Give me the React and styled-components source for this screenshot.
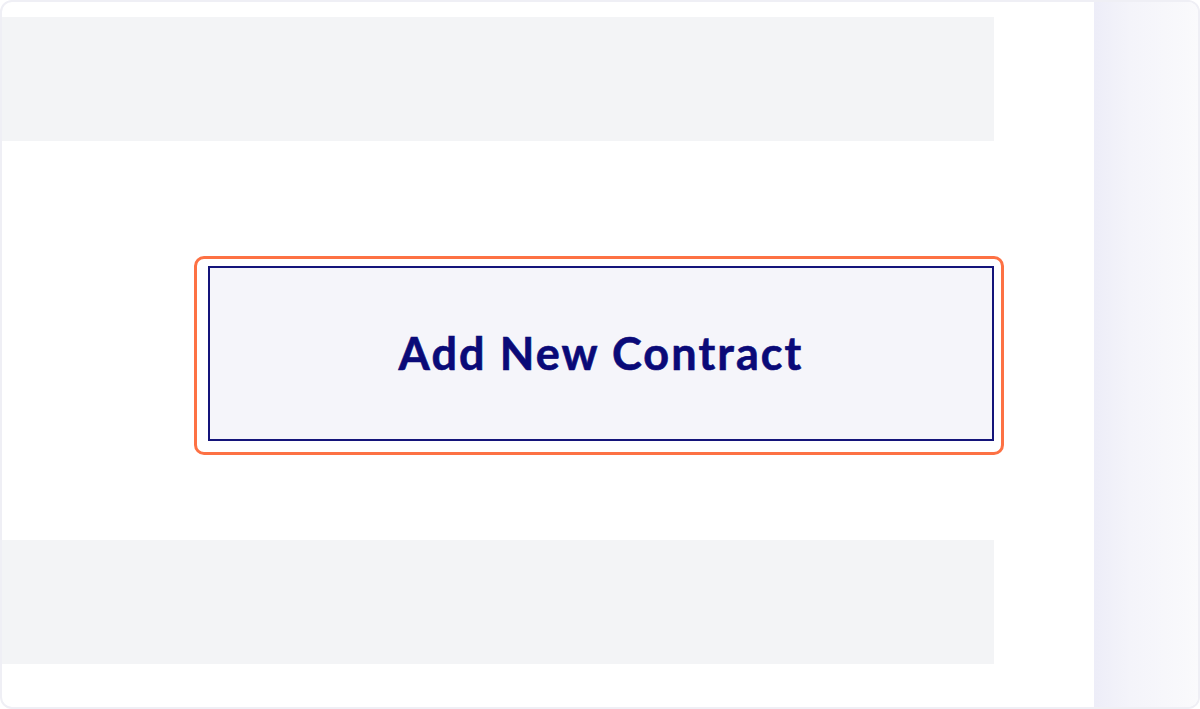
import React from 'react';
import styled, { createGlobalStyle } from 'styled-components';

const GlobalStyle = createGlobalStyle`
    html, body {
        margin: 0;
        padding: 0;
        background: #ffffff;
    }
    * {
        box-sizing: border-box;
    }
`

const Frame = styled.div`
    width: 1200px;
    height: 709px;
    display: flex;
    border: 2px solid #efeff5;
    border-radius: 12px;
    overflow: hidden;
    background: #fff;
`

const Main = styled.main`
    flex: 1;
    display: flex;
    flex-direction: column;
    padding: 15px 100px 0 0;
`

const Placeholder = styled.div`
    height: 124px;
    background: #f3f4f6;
    flex-shrink: 0;
`

const Middle = styled.div`
    height: 399px;
    flex-shrink: 0;
    display: flex;
    align-items: flex-start;
    justify-content: flex-end;
    padding-top: 115px;
`

const Highlight = styled.div`
    width: 810px;
    height: 199px;
    margin-right: -10px;
    border: 3px solid #fd7144;
    border-radius: 10px;
    padding: 7px 7px 11px 11px;
    display: flex;
`

const AddButton = styled.button`
    flex: 1;
    background: #f5f5fa;
    border: 2px solid #14147a;
    border-radius: 0;
    font-family: Lato, "Open Sans", sans-serif;
    font-weight: 700;
    font-size: 45px;
    color: #0a0a78;
    cursor: pointer;
    padding: 0 0 2px;
    letter-spacing: 2.1px;
    -webkit-text-stroke: 0.6px #0a0a78;
`

const SidePanel = styled.aside`
    width: 104px;
    background: linear-gradient(90deg, #ededf8 0%, #f4f4fa 35%, #fafafc 100%);
`

export default function App() {
    return (
        <>
            <GlobalStyle />
            <Frame>
                <Main>
                    <Placeholder />
                    <Middle>
                        <Highlight>
                            <AddButton>Add New Contract</AddButton>
                        </Highlight>
                    </Middle>
                    <Placeholder />
                </Main>
                <SidePanel />
            </Frame>
        </>
    )
}
